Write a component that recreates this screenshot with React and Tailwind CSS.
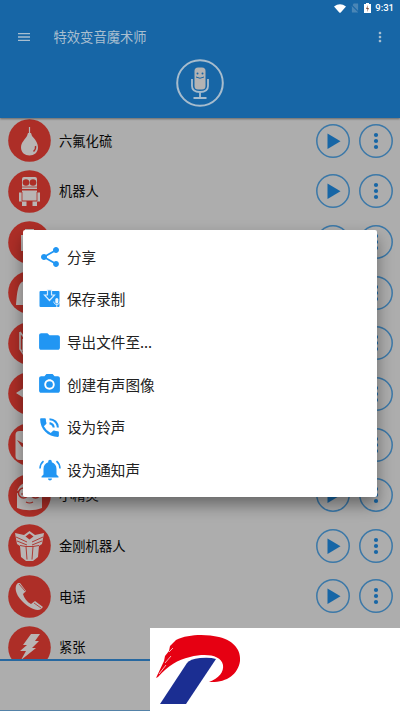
import { MdShare, MdFolder, MdPhotoCamera, MdPhoneInTalk, MdMenu, MdMoreVert } from "react-icons/md";

const effects = [
  { name: "六氟化硫", icon: "balloon" },
  { name: "机器人", icon: "robot" },
  { name: "", icon: "giant" },
  { name: "", icon: "ghost" },
  { name: "", icon: "squirrel" },
  { name: "", icon: "back" },
  { name: "", icon: "mask" },
  { name: "小精灵", icon: "minion" },
  { name: "金刚机器人", icon: "transformer" },
  { name: "电话", icon: "phone" },
  { name: "紧张", icon: "bolt" }
];

const glyphs = {
  balloon: (
    <>
      <path d="M21.500 8v7" stroke="#b9b5b4" strokeWidth="1.200" />
      <path d="M20 14h3l1 3c3 3 6 7 6 11.500 0 5-4 8-8.500 8S13 33.500 13 28.500c0-5 4-8 6-11.500z" fill="#b9b5b4" />
      <path d="M27.500 27c.5 2-.5 4-2 5.500" stroke="#ad2e27" strokeWidth="1.400" fill="none" />
    </>
  ),
  robot: (
    <>
      <path d="M16 7h11q2 0 2 2v10H14V9q0-2 2-2zM14 20.500h15v2h3v9h-3v-1H14v1h-3v-9h3zM14 31.500h4.500v4.500H14zM24.500 31.500H29v4.500h-4.500z" fill="#b9b5b4" />
      <circle cx="18" cy="12.500" r="3.300" fill="#ad2e27" />
      <circle cx="25" cy="12.500" r="3.300" fill="#ad2e27" />
      <path d="M14 17h15M14 22v9M29 22v9" stroke="#ad2e27" strokeWidth="0.800" />
    </>
  ),
  giant: <path d="M17 8h9v6h4v16H13V14h4z" fill="#b9b5b4" />,
  ghost: <path d="M8 34c1-9 1-24 9-24h9c8 0 8 15 9 24z" fill="#b9b5b4" />,
  squirrel: (
    <path d="M12 10v17l4 6M12 10l6 8h8M15 17v12M16 33h12l4-6V10l-6 8" fill="none" stroke="#b9b5b4" strokeWidth="1.600" />
  ),
  back: <path d="M8 21l14-9v18zM22 21l13-9v18z" fill="#b9b5b4" />,
  mask: (
    <>
      <rect x="7.500" y="8" width="28" height="29" rx="4" fill="#b9b5b4" />
      <path d="M9 17l9 5-4 2zM34 17l-9 5 4 2z" fill="#ad2e27" />
    </>
  ),
  minion: (
    <>
      <path d="M9 34V20C9 4 34 4 34 20v14c-8 3-17 3-25 0z" fill="#b9b5b4" />
      <path d="M7 18h28" stroke="#ad2e27" strokeWidth="2" />
      <circle cx="15.500" cy="19" r="5" fill="#b9b5b4" stroke="#ad2e27" strokeWidth="1.500" />
      <circle cx="27.500" cy="19" r="5" fill="#b9b5b4" stroke="#ad2e27" strokeWidth="1.500" />
      <path d="M13 20h5M25 20h5M18 28q3.500 2 7 0" stroke="#ad2e27" strokeWidth="1.200" fill="none" />
    </>
  ),
  transformer: (
    <>
      <path d="M7 9l9 2 5.500-4 5.500 4 9-2-2 11-3 2-1 11-5 4h-7l-5-4-1-11-3-2z" fill="#b9b5b4" />
      <path d="M21.500 9.500l4 3-4 3-4-3z" fill="#ad2e27" />
      <path d="M8 13l11 5M9 17l10 4M35 13l-11 5M34 17l-10 4M12 21.500l6 1 1 13M31 21.500l-6 1-1 13M18 22.500h7" stroke="#ad2e27" strokeWidth="0.900" fill="none" />
    </>
  ),
  phone: (
    <>
      <path d="M10 8c-4 3-3 11 4 18s15 11 19 8l2-2-8-6-4 3c-4-2-7-6-8-10l3-3-6-8z" fill="#b9b5b4" />
      <path d="M11 9l6 7M26 28l7 5" stroke="#ad2e27" strokeWidth="0.800" />
    </>
  ),
  bolt: <path d="M23 8h9l-5 7h4l-7 7h4L13 34l5-9h-6l7-6h-4z" fill="#b9b5b4" />
};

function SaveIcon() {
  return (
    <svg viewBox="0 0 24 24" className="h-[24px] w-[25px]">
      <path d="M3 4h18q1 0 1 1v14q0 1-1 1H3q-1 0-1-1V5q0-1 1-1z" fill="#2196f3" />
      <path d="M10 3h4v5h3l-5 5.500L7 8h3z" fill="#2196f3" stroke="#d8edff" strokeWidth="1.200" />
      <rect x="17.800" y="11" width="3" height="5.500" rx="1.500" fill="#eef7ff" />
      <path d="M16.300 14.500c0 4 6 4 6 0M19.300 17.500v2.500" stroke="#eef7ff" fill="none" strokeWidth="0.900" />
    </svg>
  );
}

function BellIcon() {
  return (
    <svg viewBox="0 0 24 24" className="size-6">
      <path d="M12 22.500c1.100 0 2-.9 2-2h-4c0 1.100.9 2 2 2zm6.500-6v-5.500c0-3.500-1.800-6-4.700-6.800V3.500a1.800 1.800 0 0 0-3.600 0v.7C7.300 5 5.500 7.500 5.500 11v5.500l-2 2v1h17v-1z" fill="#2196f3" />
      <path d="M5.500 3.200C3.200 5 2.200 7.500 2 10.500M18.500 3.200c2.300 1.800 3.300 4.300 3.500 7.300" stroke="#2196f3" strokeWidth="1.600" fill="none" />
    </svg>
  );
}

const actions = [
  { label: "分享", icon: <MdShare className="size-6" /> },
  { label: "保存录制", icon: <SaveIcon /> },
  { label: "导出文件至...", icon: <MdFolder className="size-[25px]" /> },
  { label: "创建有声图像", icon: <MdPhotoCamera className="size-[25px]" /> },
  { label: "设为铃声", icon: <MdPhoneInTalk className="size-[25px]" /> },
  { label: "设为通知声", icon: <BellIcon /> }
];

function StatusBar() {
  return (
    <div className="flex h-4 items-center justify-end pr-[6px] text-white">
      <svg viewBox="0 0 12 9" className="mr-[5px] h-[9px] w-3">
        <path d="M0 2.500q6-4.500 12 0L6.500 8.800h-1z" fill="#fff" />
      </svg>
      <svg viewBox="0 0 9 10" className="mr-[5px] h-[10px] w-2">
        <path d="M3 0h5v10H1V3z" fill="#4a86b6" />
        <path d="M0 1l9 9" stroke="#1766a6" strokeWidth="1.200" />
      </svg>
      <svg viewBox="0 0 7 10" className="mr-[4px] h-[10px] w-[7px]">
        <path d="M2 0h3v1h2v9H0V1h2z" fill="#fff" />
        <path d="M4 2L2 6h1.500L3 9l2-4H3.500z" fill="#805040" />
      </svg>
      <span className="font-[Roboto,sans-serif] text-[9.500px] leading-4 font-medium">9:31</span>
    </div>
  );
}

function MicButton() {
  return (
    <svg viewBox="0 0 48 48" className="mx-auto size-12" fill="none" stroke="#a7bccd">
      <circle cx="24" cy="24" r="22.800" strokeWidth="2" />
      <rect x="18.500" y="8.500" width="11" height="22" rx="3.500" fill="#b3b3b3" stroke="none" />
      <path d="M16 20v7q0 6 8 6t8-6v-7M24 33v6M17.500 39h13" strokeWidth="1.800" />
      <path d="M20 18q4 2.500 8 0" stroke="#1766a6" strokeWidth="1" />
      <circle cx="21.500" cy="14.500" r="1" fill="#1766a6" stroke="none" />
      <circle cx="26.500" cy="14.500" r="1" fill="#1766a6" stroke="none" />
    </svg>
  );
}

function EffectRow({ name, icon }) {
  return (
    <div className="flex h-[50.650px] shrink-0 items-center pr-[7px] pl-[8px]">
      <svg viewBox="0 0 43 43" className="size-[43px]">
        <circle cx="21.500" cy="21.500" r="21.300" fill="#ad2e27" />
        {glyphs[icon]}
      </svg>
      <span className="ml-2 flex-1 text-[13.300px] text-[#080808]">{name}</span>
      <svg viewBox="0 0 34 34" className="size-[34px]">
        <circle cx="17" cy="17" r="16.200" fill="none" stroke="#3b78a8" strokeWidth="1.500" />
        <path d="M11.500 9.500v15.500l13-7.750z" fill="#1766a6" />
      </svg>
      <svg viewBox="0 0 34 34" className="ml-[9px] size-[34px]" fill="#1766a6">
        <circle cx="17" cy="17" r="16.200" fill="none" stroke="#3b78a8" strokeWidth="1.500" />
        <circle cx="17" cy="11" r="2.100" />
        <circle cx="17" cy="17" r="2.100" />
        <circle cx="17" cy="23" r="2.100" />
      </svg>
    </div>
  );
}

export default function App() {
  return (
    <div className="relative flex h-[711px] w-[400px] flex-col overflow-hidden bg-[#adadad] font-['Noto_Sans_CJK_SC',sans-serif]">
      <header className="z-10 h-[118px] shrink-0 bg-[#1766a6] shadow-[0_1px_2px_rgba(0,0,0,0.4)]">
        <StatusBar />
        <div className="flex h-[42px] items-center pr-3 pl-4 text-[#a9bfd0]">
          <MdMenu className="size-4" />
          <h1 className="ml-[21.500px] flex-1 text-[13.300px]">特效变音魔术师</h1>
          <MdMoreVert className="size-4" />
        </div>
        <div className="pt-[1px]">
          <MicButton />
        </div>
      </header>

      <main className="flex h-[541px] shrink-0 flex-col overflow-hidden">
        <div className="-mt-[2.600px] flex flex-col">
          {effects.map((e) => (
            <EffectRow key={e.icon} name={e.name} icon={e.icon} />
          ))}
        </div>
      </main>
      <footer className="h-[52px] shrink-0 border-t-2 border-b border-t-[#2768a0] border-b-[#5482a8]" />

      <div className="absolute top-[230px] left-[23px] z-20 flex h-[267px] w-[354px] flex-col rounded-[2px] bg-white pt-[5.500px] shadow-[0_8px_16px_rgba(0,0,0,0.4)]">
        {actions.map((a) => (
          <button key={a.label} className="flex h-[42.600px] items-center pl-[14px] text-[#2196f3]">
            <span className="flex w-[25px] justify-center">{a.icon}</span>
            <span className="ml-[5px] text-[14.600px] text-[#212121]">{a.label}</span>
          </button>
        ))}
      </div>

      <div className="absolute right-0 bottom-0 z-30 h-[83px] w-[250px] bg-white">
        <svg viewBox="0 0 130 83" className="h-[83px] w-[130px]">
          <path d="M37 35Q40 31 50 30Q60 29 66 31L36 76H10z" fill="#1b2e92" />
          <path d="M6 50L14 33L15 28L19 23L20 18L26 12C38 6 56 6 69 9C85 13 91 23 90 33C88 47 76 55 59 54C69 50 74 44 73 37C71 27 56 25 40 29C27 32 19 37 8 49z" fill="#e60012" />
          <path d="M9 46l7-9M15 35l6-7M19 24l4-4" stroke="#fff" strokeWidth="0.700" />
        </svg>
      </div>
    </div>
  );
}
